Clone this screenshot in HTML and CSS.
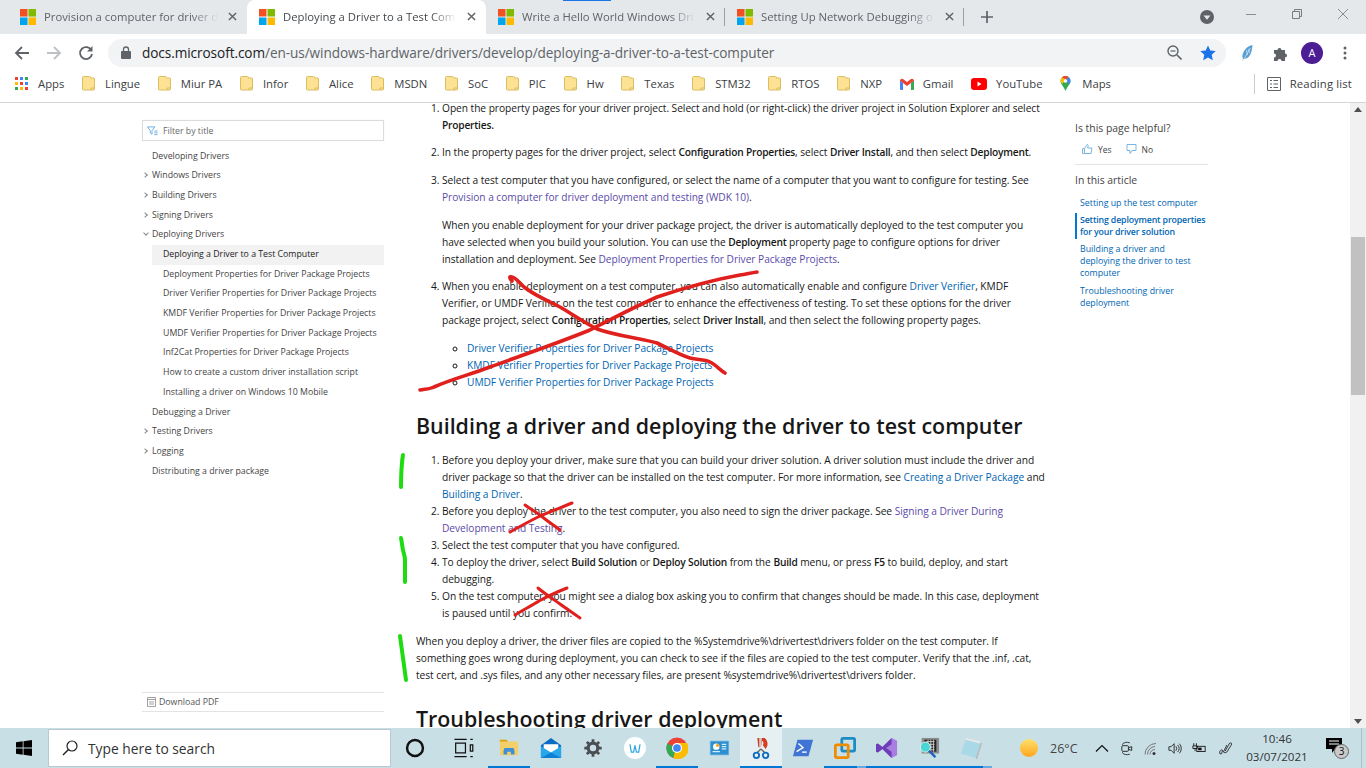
FILE: index.html
```html
<!DOCTYPE html>
<html>
<head>
<meta charset="utf-8">
<title>Deploying a Driver to a Test Computer</title>
<link rel="stylesheet" href="styles.css">
</head>
<body>
<svg class="defs" width="0" height="0">
  <symbol id="ms" viewBox="0 0 16 16">
    <rect width="7.5" height="7.5" fill="#f25022"/><rect x="8.5" width="7.5" height="7.5" fill="#7fba00"/>
    <rect y="8.5" width="7.5" height="7.5" fill="#00a4ef"/><rect x="8.5" y="8.5" width="7.5" height="7.5" fill="#ffb900"/>
  </symbol>
  <symbol id="folder" viewBox="0 0 13 15">
    <path d="M.5 1.5q0-1 1-1h6q1 0 1 1v.5h3q1 0 1 1v10q0 1-1 1h-10q-1 0-1-1z" fill="#fde293" stroke="#d9bd63"/>
    <path d="M9 14v-2h3.500" fill="none" stroke="#d9bd63"/>
  </symbol>
  <symbol id="close" viewBox="0 0 10 10"><path d="M1 1l8 8M9 1l-8 8" stroke="#5f6368" stroke-width="1.600"/></symbol>
</svg>

<div class="tabstrip">
  <div class="tab">
    <svg class="favicon"><use href="#ms"/></svg><span class="tab-title">Provision a computer for driver d</span>
    <svg class="tab-x"><use href="#close"/></svg>
  </div>
  <div class="tab tab-active">
    <svg class="favicon"><use href="#ms"/></svg><span class="tab-title">Deploying a Driver to a Test Com</span>
    <svg class="tab-x"><use href="#close"/></svg>
  </div>
  <div class="tab tab-sep">
    <svg class="favicon"><use href="#ms"/></svg><span class="tab-title">Write a Hello World Windows Dri</span>
    <svg class="tab-x"><use href="#close"/></svg>
  </div>
  <div class="tab tab-sep">
    <svg class="favicon"><use href="#ms"/></svg><span class="tab-title">Setting Up Network Debugging o</span>
    <svg class="tab-x"><use href="#close"/></svg>
  </div>
  <svg class="new-tab" viewBox="0 0 12 12"><path d="M6 0v12M0 6h12" stroke="#5f6368" stroke-width="1.700"/></svg>
  <svg class="tab-search" viewBox="0 0 14 14"><circle cx="7" cy="7" r="7" fill="#5f6368"/><path d="M3.500 5.500h7L7 9.800z" fill="#e6e9ec"/></svg>
  <div class="winbtns">
    <svg viewBox="0 0 10 10"><path d="M0 5.500h10" stroke="#8a8d90"/></svg>
    <svg viewBox="0 0 10 10"><path d="M.5 2.500h7v7h-7zM2.500 2.500v-2h7v7h-2" fill="none" stroke="#7a7d80"/></svg>
    <svg viewBox="0 0 10 10"><path d="M0 0l10 10M10 0l-10 10" stroke="#8a8d90"/></svg>
  </div>
  <div class="top-sliver"></div>
</div>

<div class="toolbar">
  <svg class="tool" viewBox="0 0 16 16"><path d="M15 8H2.500M8 2L2 8l6 6" fill="none" stroke="#5f6368" stroke-width="1.800"/></svg>
  <svg class="tool" viewBox="0 0 16 16"><path d="M1 8h12.500M8 2l6 6-6 6" fill="none" stroke="#bdc1c6" stroke-width="1.800"/></svg>
  <svg class="tool" viewBox="0 0 16 16"><path d="M13.500 5.500A6 6 0 1 0 14 9" fill="none" stroke="#5f6368" stroke-width="1.800"/><path d="M14.500 1v5.500H9z" fill="#5f6368"/></svg>
  <div class="omnibox">
    <svg class="lock" viewBox="0 0 10 13"><path d="M2.500 5.500V3.500a2.500 2.500 0 0 1 5 0v2" fill="none" stroke="#5f6368" stroke-width="1.300"/><rect y="5" width="10" height="8" rx="1" fill="#5f6368"/></svg>
    <span class="url">docs.microsoft.com<span class="url-path">/en-us/windows-hardware/drivers/develop/deploying-a-driver-to-a-test-computer</span></span>
    <svg class="omni-zoom" viewBox="0 0 15 15"><circle cx="6" cy="6" r="5" fill="none" stroke="#5f6368" stroke-width="1.400"/><path d="M10 10l4.500 4.500" stroke="#5f6368" stroke-width="1.600"/><path d="M3.500 6h5" stroke="#5f6368" stroke-width="1.200"/></svg>
    <svg class="omni-star" viewBox="0 0 16 16"><path d="M8 .5l2.300 5 5.400.6-4 3.700 1.100 5.400L8 12.500l-4.800 2.700 1.100-5.400-4-3.700 5.400-.6z" fill="#1a73e8"/></svg>
  </div>
  <svg class="ext-feather" viewBox="0 0 12 18"><path d="M11 1C6 2 2 6 1 11c-.4 2 0 3 .7 3.500L.5 17.500l1.800-2.700C8 15 10.500 9 11 1z" fill="#5a9fd4"/><path d="M9 4L3 14M5 6l1 5M7 5l1 4" stroke="#cfe4f5" stroke-width=".8"/></svg>
  <svg class="ext-puzzle" viewBox="0 0 16 16"><path d="M1 5h3.500a2 2 0 1 1 4 0H12v3.500a2 2 0 1 1 0 4V16H8.500a2 2 0 1 0-4 0H1v-3.500a2 2 0 1 0 0-4z" fill="#5f6368"/></svg>
  <div class="avatar">A</div>
  <svg class="kebab" viewBox="0 0 4 14"><circle cx="2" cy="2" r="1.500" fill="#5f6368"/><circle cx="2" cy="7" r="1.500" fill="#5f6368"/><circle cx="2" cy="12" r="1.500" fill="#5f6368"/></svg>
</div>

<div class="bookmarks">
  <div class="bm bm-apps">
    <svg class="apps-grid" viewBox="0 0 13 13">
      <rect width="3" height="3" fill="#ea4335"/><rect x="5" width="3" height="3" fill="#4285f4"/><rect x="10" width="3" height="3" fill="#34a853"/>
      <rect y="5" width="3" height="3" fill="#fbbc05"/><rect x="5" y="5" width="3" height="3" fill="#ea4335"/><rect x="10" y="5" width="3" height="3" fill="#4285f4"/>
      <rect y="10" width="3" height="3" fill="#34a853"/><rect x="5" y="10" width="3" height="3" fill="#fbbc05"/><rect x="10" y="10" width="3" height="3" fill="#ea4335"/>
    </svg>Apps
  </div>
  <div class="bm"><svg class="bm-folder"><use href="#folder"/></svg>Lingue</div>
  <div class="bm"><svg class="bm-folder"><use href="#folder"/></svg>Miur PA</div>
  <div class="bm"><svg class="bm-folder"><use href="#folder"/></svg>Infor</div>
  <div class="bm"><svg class="bm-folder"><use href="#folder"/></svg>Alice</div>
  <div class="bm"><svg class="bm-folder"><use href="#folder"/></svg>MSDN</div>
  <div class="bm"><svg class="bm-folder"><use href="#folder"/></svg>SoC</div>
  <div class="bm"><svg class="bm-folder"><use href="#folder"/></svg>PIC</div>
  <div class="bm"><svg class="bm-folder"><use href="#folder"/></svg>Hw</div>
  <div class="bm"><svg class="bm-folder"><use href="#folder"/></svg>Texas</div>
  <div class="bm"><svg class="bm-folder"><use href="#folder"/></svg>STM32</div>
  <div class="bm"><svg class="bm-folder"><use href="#folder"/></svg>RTOS</div>
  <div class="bm"><svg class="bm-folder"><use href="#folder"/></svg>NXP</div>
  <div class="bm"><svg class="bm-icon" viewBox="0 0 14 12"><path d="M0 2v9a1 1 0 0 0 1 1h2V5z" fill="#4285f4"/><path d="M14 2v9a1 1 0 0 1-1 1h-2V5z" fill="#34a853"/><path d="M0 2.500a2 2 0 0 1 3-1.500l4 3 4-3a2 2 0 0 1 3 1.500L11 5 7 8 3 5z" fill="#ea4335"/></svg>Gmail</div>
  <div class="bm"><svg class="bm-icon bm-yt" viewBox="0 0 16 12"><rect width="16" height="12" rx="3" fill="#f00"/><path d="M6.500 3.500l4 2.500-4 2.500z" fill="#fff"/></svg>YouTube</div>
  <div class="bm"><svg class="bm-icon bm-maps" viewBox="0 0 10 15"><path d="M5 0a5 5 0 0 1 5 5c0 3-3 5-5 10-2-5-5-7-5-10a5 5 0 0 1 5-5z" fill="#34a853"/><path d="M1 2a5 5 0 0 1 7-1L1.500 8A5 5 0 0 1 1 2z" fill="#fbbc05"/><path d="M1.500 1.500A5 5 0 0 1 8 1L5.500 3.500z" fill="#ea4335"/><path d="M8 1a5 5 0 0 1 2 4c0 1-.5 2-1 3L5 5z" fill="#4285f4"/><circle cx="5" cy="5" r="1.800" fill="#fff"/></svg>Maps</div>
  <div class="bm bm-reading">
    <svg class="bm-list" viewBox="0 0 14 14"><path d="M.5.500h13v13H.5z" fill="none" stroke="#5f6368"/><path d="M3 3.500h2M6.500 3.500H11M3 7h2M6.500 7H11M3 10.500h2M6.500 10.500H11" stroke="#5f6368" stroke-width="1.200"/></svg>Reading list
  </div>
</div>

<div class="page">
  <div class="site">
    <nav class="toc">
      <div class="filter">
        <svg class="filter-ico" viewBox="0 0 12 10"><path d="M.5.500h8L5.500 4.500v4l-2-1.500V4.500zM8 5h3.500M8 7h3.500M8 9h3.500" fill="none" stroke="#5ba3dc" stroke-width=".9"/></svg>
        Filter by title
      </div>
      <ul class="toc-list">
        <li>Developing Drivers</li>
        <li class="closed">Windows Drivers</li>
        <li class="closed">Building Drivers</li>
        <li class="closed">Signing Drivers</li>
        <li class="open">Deploying Drivers</li>
        <li class="sub sub-active">Deploying a Driver to a Test Computer</li>
        <li class="sub">Deployment Properties for Driver Package Projects</li>
        <li class="sub">Driver Verifier Properties for Driver Package Projects</li>
        <li class="sub">KMDF Verifier Properties for Driver Package Projects</li>
        <li class="sub">UMDF Verifier Properties for Driver Package Projects</li>
        <li class="sub">Inf2Cat Properties for Driver Package Projects</li>
        <li class="sub">How to create a custom driver installation script</li>
        <li class="sub">Installing a driver on Windows 10 Mobile</li>
        <li>Debugging a Driver</li>
        <li class="closed">Testing Drivers</li>
        <li class="closed">Logging</li>
        <li>Distributing a driver package</li>
      </ul>
      <div class="pdf">
        <svg class="pdf-ico" viewBox="0 0 9 10"><path d="M.5.500h8v9h-8zM.5 2.500h8M2 5h5M2 7h5" fill="none" stroke="#8a8a8a" stroke-width=".8"/></svg>
        Download PDF
      </div>
    </nav>

    <main class="article">
      <ol class="steps steps-wide">
        <li><span class="top-line">Open the property pages for your driver project. Select and hold (or right-click) the driver project in Solution Explorer and select</span><b>Properties.</b></li>
        <li>In the property pages for the driver project, select <b>Configuration Properties</b>, select <b>Driver Install</b>, and then select <b>Deployment</b>.</li>
        <li>Select a test computer that you have configured, or select the name of a computer that you want to configure for testing. See<br><a class="seen">Provision a computer for driver deployment and testing (WDK 10)</a>.
          <p>When you enable deployment for your driver package project, the driver is automatically deployed to the test computer you<br>have selected when you build your solution. You can use the <b>Deployment</b> property page to configure options for driver<br>installation and deployment. See <a class="seen">Deployment Properties for Driver Package Projects</a>.</p>
        </li>
        <li>When you enable deployment on a test computer, you can also automatically enable and configure <a>Driver Verifier</a>, KMDF<br>Verifier, or UMDF Verifier on the test computer to enhance the effectiveness of testing. To set these options for the driver<br>package project, select <b>Configuration Properties</b>, select <b>Driver Install</b>, and then select the following property pages.
          <ul class="links">
            <li><a>Driver Verifier Properties for Driver Package Projects</a></li>
            <li><a>KMDF Verifier Properties for Driver Package Projects</a></li>
            <li><a>UMDF Verifier Properties for Driver Package Projects</a></li>
          </ul>
        </li>
      </ol>

      <h2>Building a driver and deploying the driver to test computer</h2>

      <ol class="steps">
        <li>Before you deploy your driver, make sure that you can build your driver solution. A driver solution must include the driver and<br>driver package so that the driver can be installed on the test computer. For more information, see <a>Creating a Driver Package</a> and<br><a>Building a Driver</a>.</li>
        <li>Before you deploy the driver to the test computer, you also need to sign the driver package. See <a class="seen">Signing a Driver During<br>Development and Testing</a>.</li>
        <li>Select the test computer that you have configured.</li>
        <li>To deploy the driver, select <b>Build Solution</b> or <b>Deploy Solution</b> from the <b>Build</b> menu, or press <b>F5</b> to build, deploy, and start<br>debugging.</li>
        <li>On the test computer, you might see a dialog box asking you to confirm that changes should be made. In this case, deployment<br>is paused until you confirm.</li>
      </ol>

      <p class="para">When you deploy a driver, the driver files are copied to the %Systemdrive%\drivertest\drivers folder on the test computer. If<br>something goes wrong during deployment, you can check to see if the files are copied to the test computer. Verify that the .inf, .cat,<br>test cert, and .sys files, and any other necessary files, are present %systemdrive%\drivertest\drivers folder.</p>

      <h2 class="h2-last">Troubleshooting driver deployment</h2>
    </main>

    <aside class="side">
      <div class="helpful">Is this page helpful?</div>
      <div class="votes">
        <svg class="vote-ico" viewBox="0 0 11 10"><path d="M.5 4.500h2v5h-2zM2.500 4.500L5 .5c1 0 1.500.8 1 2l-.5 1.500h4.500l-1 5.500H2.500" fill="none" stroke="#5ba3dc" stroke-width=".8"/></svg><span class="vote-label">Yes</span>
        <svg class="vote-ico vote-no" viewBox="0 0 11 10"><path d="M1 .5h9v6H6L4 9.500V6.500H1z" fill="none" stroke="#5ba3dc" stroke-width=".8"/></svg><span class="vote-label">No</span>
      </div>
      <div class="in-article">In this article</div>
      <ul class="outline">
        <li>Setting up the test computer</li>
        <li class="current">Setting deployment properties<br>for your driver solution</li>
        <li>Building a driver and<br>deploying the driver to test<br>computer</li>
        <li>Troubleshooting driver<br>deployment</li>
      </ul>
    </aside>
  </div>

  <div class="scrollbar">
    <div class="sb-up"></div>
    <div class="sb-track"><div class="sb-thumb"></div></div>
    <div class="sb-down"></div>
  </div>

  <svg class="ink" viewBox="0 0 1366 625" width="1366" height="625">
    <g transform="translate(0,-103)" fill="none" stroke-linecap="round" stroke-linejoin="round">
      <g stroke="#e0201c" stroke-width="3.600">
        <path d="M512 281c-3-3-3-5 0-4 4 1 6 4 12 10 10 8 24 14 36 20 12 7 25 16 37 22 20 7 42 9 60 14 11 5 22 12 33 15 7 2 14 1 20 4 6 3 10 8 15 11"/>
        <path d="M420 390c5-1 10-1 14-3 18-8 38-13 56-20 33-12 68-24 100-37 22-11 44-23 67-33 27-9 55-17 83-22 6-1 11-2 17-3"/>
      </g>
      <g stroke="#e0201c" stroke-width="3">
        <path d="M572 503c-12 5-23 9-34 14-10 5-19 10-28 15"/>
        <path d="M525 505c7 5 14 9 20 14 5 4 10 7 15 11"/>
        <path d="M567 588c-10 4-19 8-28 13-8 5-16 9-24 14"/>
        <path d="M538 588c7 6 15 11 22 16 7 5 13 9 20 14"/>
      </g>
      <g stroke="#1fdc12" stroke-width="4">
        <path d="M403 455c-1 5-1 9-1.500 14-.3 6-.5 12-.5 18"/>
        <path d="M401 538c1 4 1 8 2 12 .5 3 2 6 2 10v22"/>
        <path d="M400 636c1 7 2 15 3 22 1 7 2 15 3 22"/>
      </g>
    </g>
  </svg>
</div>

<div class="taskbar">
  <svg class="start" viewBox="0 0 16 16"><path d="M0 2.300L6.700 1.300v6.300H0zM7.500 1.200L16 0v7.600H7.500zM0 8.400h6.700v6.300L0 13.700zM7.500 8.400H16V16l-8.500-1.200z" fill="#000"/></svg>
  <div class="searchbox">
    <svg class="search-ico" viewBox="0 0 16 16"><circle cx="10" cy="6" r="5" fill="none" stroke="#222" stroke-width="1.200"/><path d="M6.500 9.500L1 15" stroke="#222" stroke-width="1.400"/></svg>
    Type here to search
  </div>
  <div class="cell cell-wide"><svg class="ti" viewBox="0 0 18 18"><circle cx="9" cy="9" r="6.500" fill="none" stroke="#111" stroke-width="2"/></svg></div>
  <div class="cell cell-wide"><svg class="ti" viewBox="0 0 18 18"><path d="M2 2h10M2 16h10M3 5h8v8H3zM15 2h2M15 16h2M15 6.500h2v5h-2z" fill="none" stroke="#111" stroke-width="1"/></svg></div>
  <div class="cell run"><svg class="ti" viewBox="0 0 24 24"><path d="M2 3h7l2 2h11v15H2z" fill="#f3cf6a"/><path d="M2 3h7l2 2H2z" fill="#dca20f"/><path d="M7 12h10l1 3v4h-4v-3h-4v3H6v-4z" fill="#3f8fd8"/></svg></div>
  <div class="cell"><svg class="ti" viewBox="0 0 24 24"><path d="M12 1L1 9v14h22V9z" fill="#0a6cc2"/><path d="M4 8h16v6l-8 4-8-4z" fill="#fff"/><path d="M1 10l11 7 11-7v13H1z" fill="#28a8ea"/><path d="M1 23l11-6 11 6z" fill="#0f7fd4"/></svg></div>
  <div class="cell"><svg class="ti" viewBox="0 0 24 24"><path d="M12 5a7 7 0 1 0 0 14 7 7 0 0 0 0-14zm0 3.500a3.500 3.500 0 1 1 0 7 3.500 3.500 0 0 1 0-7z" fill="#4a4f53"/><path d="M12 2.500v4M12 17.500v4M2.500 12h4M17.500 12h4M5.300 5.300l2.800 2.800M15.900 15.900l2.800 2.800M18.700 5.300l-2.800 2.800M8.100 15.900l-2.800 2.800" stroke="#4a4f53" stroke-width="3"/></svg></div>
  <div class="cell"><svg class="ti" viewBox="0 0 24 24"><circle cx="12" cy="12" r="12" fill="#fff"/><path d="M6.500 8l1.500 8.500h2.500L12 9l1.500 7.500H16L17.500 8" fill="none" stroke="#2ba6e0" stroke-width="1.300"/></svg></div>
  <div class="cell run"><svg class="ti" viewBox="0 0 24 24"><circle cx="12" cy="12" r="11.500" fill="#ea4335"/><path d="M12 12L1.500 7A11.500 11.500 0 0 0 8 22.800z" fill="#34a853"/><path d="M12 6.500H23A11.500 11.500 0 0 1 8 22.800z" fill="#fbbc05"/><circle cx="12" cy="12" r="5.500" fill="#fff"/><circle cx="12" cy="12" r="4.200" fill="#4285f4"/></svg></div>
  <div class="cell"><svg class="ti" viewBox="0 0 24 24"><rect x="2" y="4" width="21" height="16" rx="1" fill="#6fb3de"/><rect x="3" y="5" width="19" height="14" fill="#2d8fd0"/><circle cx="9" cy="10.500" r="3.500" fill="#fff"/><path d="M9 10.500V7a3.500 3.500 0 0 1 3.500 3.500z" fill="#f4a32c"/><path d="M15 8h5M15 10.500h5M15 13h5M5 16h8" stroke="#d5ecfa" stroke-width="1.200"/></svg></div>
  <div class="cell run cell-active"><svg class="ti" viewBox="0 0 24 24"><path d="M8 1h8c4 3 4 9 1 12l-3-4c1-2 1-4-1-5l-1 7H9z" fill="#d83b20"/><path d="M10 1h3l-1 10-2 2z" fill="#c9c9c9"/><path d="M12 13l-4 4M12 13l4 4" stroke="#666" stroke-width="1.500"/><circle cx="7" cy="20" r="3" fill="none" stroke="#0f6cbd" stroke-width="2"/><circle cx="17" cy="20" r="3" fill="none" stroke="#0f6cbd" stroke-width="2"/></svg></div>
  <div class="cell"><svg class="ti" viewBox="0 0 24 24"><path d="M6 3h17l-5 18H1z" fill="#3f74d4"/><path d="M7 7l5 4.500-7 4.500" fill="none" stroke="#fff" stroke-width="1.500"/><path d="M11 16.500h5" stroke="#fff" stroke-width="1.500"/></svg></div>
  <div class="cell run run-split"><svg class="ti" viewBox="0 0 24 24"><rect x="8.500" y="1.500" width="14" height="14" rx="1.500" fill="none" stroke="#1c8cc4" stroke-width="3"/><rect x="1.500" y="8.500" width="14" height="14" rx="1.500" fill="none" stroke="#f08c00" stroke-width="3"/></svg></div>
  <div class="cell run"><svg class="ti" viewBox="0 0 24 24"><path d="M17 1l6 3v16l-6 3-10-10-5 4-2-1V8l2-1 5 4z" fill="#a97ee0"/><path d="M17 1L7 11l-5-4-2 1v8l2 1 5-4 10 10V16l-6-4 6-4z" fill="#6d3cb8"/></svg></div>
  <div class="cell run"><svg class="ti" viewBox="0 0 24 24"><rect x="4" y="1" width="19" height="17" fill="#8c8c8c"/><rect x="7" y="3" width="13" height="13" fill="#222"/><path d="M9 5h9M9 8h9M9 11h9M9 14h9M11 3v13M14 3v13M17 3v13" stroke="#cfcfcf"/><circle cx="8" cy="11" r="5.500" fill="#49d6d6" stroke="#eee"/><path d="M12 15l7 7" stroke="#1a5fc0" stroke-width="2.500"/></svg></div>
  <div class="cell run run-split"><svg class="ti" viewBox="0 0 24 24"><path d="M7 1l16 4-5 18L1 18z" fill="#a9d8e6"/><path d="M7 1l16 4-1 2L6 3z" fill="#e8e8e8"/><path d="M23 5l1 2-5 17h-2z" fill="#bbb"/></svg></div>

  <div class="tray">
    <svg class="sun" viewBox="0 0 18 18"><defs><linearGradient id="sun-g" x1="0" y1="0" x2="0" y2="1"><stop offset="0" stop-color="#ffe169"/><stop offset="1" stop-color="#ffa51f"/></linearGradient></defs><circle cx="9" cy="9" r="9" fill="url(#sun-g)"/></svg>
    <span class="temp">26°C</span>
    <svg class="tray-ico caret" viewBox="0 0 14 14"><path d="M1 10l6-6 6 6" fill="none" stroke="#111" stroke-width="1.200"/></svg>
    <svg class="tray-ico" viewBox="0 0 14 16"><path d="M2 4a5 3 0 0 1 8-2M2 12a5 3 0 0 0 8 2" fill="none" stroke="#333"/><rect x="1.500" y="5" width="7" height="6" rx="1" fill="none" stroke="#222"/><path d="M9 7l3-1v4l-3-1" fill="none" stroke="#222"/></svg>
    <svg class="tray-ico" viewBox="0 0 14 14"><path d="M1 13a11 11 0 0 1 11-11M3.500 13A8 8 0 0 1 11 5M6 13a5 5 0 0 1 5-5" fill="none" stroke="#777"/><circle cx="10" cy="12" r="1.500" fill="#333"/></svg>
    <svg class="tray-ico" viewBox="0 0 16 14"><path d="M1 5h2.500L7 1.500v11L3.500 9H1z" fill="none" stroke="#222"/><path d="M9 4.500a4 4 0 0 1 0 5M11 3a6 6 0 0 1 0 8M13 1.500a8 8 0 0 1 0 11" fill="none" stroke="#222"/></svg>
    <svg class="tray-ico" viewBox="0 0 16 14"><path d="M2 1v3M5 1v3M1 4h5v3H1zM3.500 7v3" fill="none" stroke="#111"/><rect x="5.500" y="4.500" width="9.500" height="6" fill="none" stroke="#111"/><rect x="7" y="6" width="4" height="3" fill="#111"/></svg>
    <svg class="tray-ico pen" viewBox="0 0 16 16"><path d="M1 14c-1-3 1-5 3-4l-1 4zM7 11l5-9c2-1 3 0 2 2l-5 8c-1 1-3 1-4 0l4-8" fill="none" stroke="#222"/></svg>
    <div class="clock">10:46<br>03/07/2021</div>
    <div class="notif">
      <svg class="notif-ico" viewBox="0 0 16 15"><path d="M0 0h16v11h-7l-3 4v-4H0z" fill="#000"/><path d="M3 3h10M3 6h10" stroke="#fff"/></svg>
      <span class="notif-count">3</span>
    </div>
  </div>
</div>
</body>
</html>
```

FILE: styles.css
```css
html, body { margin: 0; padding: 0; overflow: hidden; }
body { width: 1366px; height: 768px; font-family: "Open Sans", "Liberation Sans", sans-serif; color: #171717; background: #fff; }
ul, ol { margin: 0; padding: 0; }
.defs { position: absolute; }

/* browser tabs */
.tabstrip { position: relative; display: flex; align-items: flex-end; height: 34px; padding-left: 8px; background: #e5e8eb; }
.tab { display: flex; align-items: center; width: 239px; height: 34px; padding: 0 0 1px 12px; box-sizing: border-box; position: relative; font-size: 11.3px; color: #5f6368; flex: none; }
.tab-active { background: #fff; border-radius: 8px 8px 0 0; color: #45494d; }
.tab-sep::after { content: ""; position: absolute; top: 8px; right: 0; height: 18px; width: 1px; background: #9aa0a6; }
.favicon { width: 16px; height: 16px; flex: none; }
.tab-title { width: 174px; margin-left: 8px; white-space: nowrap; -webkit-mask-image: linear-gradient(to right, #000 85%, transparent); mask-image: linear-gradient(to right, #000 85%, transparent); }
.tab-x { width: 9px; height: 9px; margin-left: 10px; flex: none; }
.new-tab { width: 12px; height: 12px; margin: 0 0 11px 17px; flex: none; }
.tab-search { width: 14px; height: 14px; margin: 0 0 10px 207px; flex: none; }
.winbtns { position: absolute; right: 18px; top: 9px; display: flex; gap: 36px; }
.winbtns svg { width: 10px; height: 10px; }
.top-sliver { position: absolute; left: 563px; top: 0; width: 48px; height: 1px; background: #1a73e8; }

/* address bar */
.toolbar { display: flex; align-items: center; height: 37px; background: #fff; }
.tool { width: 16px; height: 16px; margin-left: 16px; flex: none; }
.tool:first-child { margin-left: 14px; }
.omnibox { display: flex; align-items: center; width: 1118px; height: 28px; margin-left: 14px; border-radius: 14px; background: #f1f3f4; font-size: 13.6px; flex: none; }
.lock { width: 10px; height: 13px; margin-left: 13px; flex: none; }
.url { margin: 0 0 1px 11px; color: #202124; white-space: nowrap; letter-spacing: -.07px; }
.url-path { color: #5f6368; }
.omni-zoom { width: 15px; height: 15px; margin-left: auto; }
.omni-star { width: 16px; height: 16px; margin: 0 10px 0 18px; }
.ext-feather { width: 13px; height: 18px; margin-left: 15px; }
.ext-puzzle { width: 16px; height: 16px; margin-left: 19px; }
.avatar { width: 22px; height: 22px; margin-left: 12px; border-radius: 50%; background: #4c1d95; color: #fff; font-size: 11px; line-height: 22px; text-align: center; }
.kebab { width: 4px; height: 14px; margin-left: 20px; }

/* bookmarks */
.bookmarks { display: flex; align-items: center; height: 32px; padding: 0 0 6px 15px; box-sizing: border-box; gap: 17.7px; border-bottom: 1px solid #d6d6d6; font-size: 11.3px; color: #3c4043; white-space: nowrap; }
.bm { display: flex; align-items: center; }
.apps-grid { width: 13px; height: 13px; margin-right: 10px; }
.bm-folder { width: 13px; height: 15px; margin-right: 10px; }
.bm-icon { width: 14px; height: 12px; margin-right: 9px; }
.bm-yt { width: 16px; }
.bm-maps { width: 11px; height: 15px; margin-right: 11px; }
.bm-reading { margin-left: auto; margin-right: 14px; height: 20px; padding-left: 12px; border-left: 1px solid #c8cacc; letter-spacing: .15px; }
.bm-list { width: 14px; height: 14px; margin-right: 9px; }

/* page: taskbar comes later in the DOM and covers what runs below the fold */
.page { position: relative; display: flex; height: 625px; }
.site { display: grid; grid-template-columns: 242px 627px 133px; column-gap: 32px; padding-left: 142px; flex: 1; height: 625px; }

.toc { display: flex; flex-direction: column; box-sizing: border-box; padding-top: 17px; height: 609px; font-size: 8.75px; color: #444; }
.filter { display: flex; align-items: center; height: 19px; border: 1px solid #dcdcdc; box-shadow: 0 0 1px #eee; color: #666; flex: none; }
.filter-ico { width: 11px; height: 10px; margin: 0 5px 0 4px; }
.toc-list { list-style: none; margin-top: 5.6px; }
.toc-list li { height: 19.7px; line-height: 19.7px; padding-left: 10px; white-space: nowrap; position: relative; }
.toc-list .closed::before { content: ""; position: absolute; left: 1px; top: 7px; width: 3px; height: 3px; border-top: 1px solid #888; border-right: 1px solid #888; transform: rotate(45deg); }
.toc-list .open::before { content: ""; position: absolute; left: 2px; top: 6px; width: 3px; height: 3px; border-bottom: 1px solid #888; border-right: 1px solid #888; transform: rotate(45deg); }
.toc-list .sub { padding-left: 21px; }
.toc-list .sub-active { margin-left: 10px; padding-left: 11px; background: #f2f2f2; color: #222; }
.pdf { display: flex; align-items: center; height: 18px; margin-top: auto; border-top: 1px solid #e3e3e3; border-bottom: 1px solid #e3e3e3; color: #555; }
.pdf-ico { width: 9px; height: 10px; margin: 0 3px 0 5px; }

.article { font-size: 10.2px; letter-spacing: -.04px; line-height: 17px; white-space: nowrap; margin-top: -3px; }
.article a { color: #0065b3; }
.article a.seen { color: #5a4ba8; }
.article b { font-weight: 600; color: #171717; letter-spacing: -.2px; }
.article p { margin: 11px 0 0; }
.steps { padding-left: 26px; }
.steps-wide > li { margin-bottom: 10.5px; }
.top-line { display: block; line-height: 10px; margin-bottom: 3.5px; }
.links { padding-left: 25px; margin-top: 11px; }
.article h2 { margin: 0; font-size: 21.4px; line-height: 28px; font-weight: 600; color: #171717; letter-spacing: 0; }
.steps-wide + h2 { margin-top: 21px; margin-bottom: 12px; }
.article .para { margin-top: 11px; }
.article .h2-last { margin-top: 21px; }

.side { padding-top: 16px; font-size: 10.4px; color: #444; }
.helpful { line-height: 18px; }
.votes { display: flex; align-items: center; height: 20px; padding: 2px 0 5px 7px; font-size: 8.5px; border-bottom: 1px solid #e3e3e3; }
.vote-ico { width: 11px; height: 10px; margin-right: 5px; }
.vote-no { margin-left: 14px; }
.in-article { margin-top: 7px; line-height: 16px; }
.outline { list-style: none; margin-top: 9px; font-size: 8.8px; line-height: 12px; color: #0065b3; white-space: nowrap; }
.outline li { padding: 0 0 0 5px; margin-bottom: 6px; }
.outline li:first-child { margin-bottom: 4px; }
.outline .current { font-weight: 600; letter-spacing: -.15px; border-left: 2px solid #0078d4; padding: 1px 0 1px 3px; margin-bottom: 4px; }

.scrollbar { display: flex; flex-direction: column; width: 16px; flex: none; background: #f1f1f1; }
.sb-up, .sb-down { height: 17px; position: relative; }
.sb-up::after { content: ""; position: absolute; left: 4px; top: 4px; border: 4px solid transparent; border-top: 0; border-bottom: 5px solid #505050; }
.sb-down::after { content: ""; position: absolute; left: 4px; top: 8px; border: 4px solid transparent; border-bottom: 0; border-top: 5px solid #505050; }
.sb-track { flex: 1; padding-top: 117px; }
.sb-thumb { width: 14px; height: 158px; margin: 0 1px; background: #c1c1c1; }

.ink { position: absolute; left: 0; top: 0; pointer-events: none; }

/* windows taskbar */
.taskbar { display: flex; align-items: center; height: 40px; background: #c9dfe6; position: relative; }
.start { width: 16px; height: 16px; margin-left: 16px; flex: none; }
.searchbox { display: flex; align-items: center; width: 343px; height: 38px; margin-left: 16px; box-sizing: border-box; background: #fff; border: 1px solid #b9c9cf; font-size: 13.8px; color: #333; flex: none; }
.search-ico { width: 16px; height: 16px; margin: 0 10px 0 13px; }
.cell { display: flex; align-items: center; justify-content: center; width: 42px; height: 40px; box-sizing: border-box; flex: none; }
.cell-wide { width: 48px; }
.cell-wide + .cell-wide { margin-right: 1px; }
.run { border-bottom: 2px solid #0078d4; padding-top: 2px; }
.run-split { border-image: linear-gradient(to right, #0078d4 78%, #6aa9dc 78%) 1; }
.cell-active { background: #e6f0f3; }
.ti { width: 22px; height: 22px; }
.tray { display: flex; align-items: center; margin: 0 4px 0 auto; height: 40px; color: #333; border-right: 1px solid #aebfc6; }
.sun { width: 18px; height: 18px; margin-right: 12px; flex: none; }
.temp { width: 43px; font-size: 12.5px; color: #444; }
.tray-ico { width: 14px; height: 15px; margin-right: 10px; flex: none; }
.caret { margin: 0 11px 0 2px; }
.pen { margin: 0 8px 0 3px; }
.clock { width: 72px; font-size: 11.6px; line-height: 18px; text-align: center; white-space: nowrap; }
.notif { position: relative; width: 32px; height: 32px; margin: 0 10px 0 6px; }
.notif-ico { position: absolute; left: 7px; top: 6px; width: 16px; height: 15px; }
.notif-count { position: absolute; left: 15px; top: 12px; width: 15px; height: 15px; box-sizing: border-box; border-radius: 50%; background: #c9c9c9; border: 1px solid #666; font-size: 10px; line-height: 13px; text-align: center; color: #111; }
```
